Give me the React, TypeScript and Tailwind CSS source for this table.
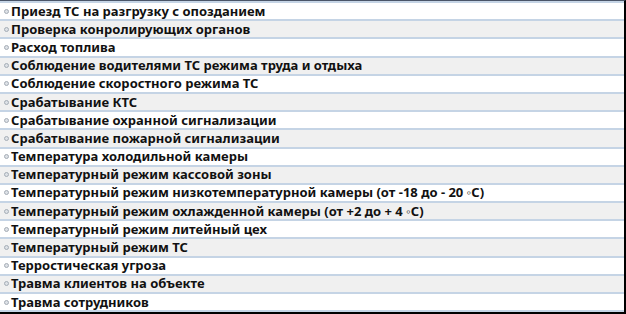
import React from "react";

const items = [
  "Приезд ТС на разгрузку с опозданием",
  "Проверка конролирующих органов",
  "Расход топлива",
  "Соблюдение водителями ТС режима труда и отдыха",
  "Соблюдение скоростного режима ТС",
  "Срабатывание КТС",
  "Срабатывание охранной сигнализации",
  "Срабатывание пожарной сигнализации",
  "Температура холодильной камеры",
  "Температурный режим кассовой зоны",
  "Температурный режим низкотемпературной камеры (от -18 до - 20 ◦С)",
  "Температурный режим охлажденной камеры (от +2 до + 4 ◦С)",
  "Температурный режим литейный цех",
  "Температурный режим ТС",
  "Терростическая угроза",
  "Травма клиентов на объекте",
  "Травма сотрудников",
];

export default function App() {
  return (
    <div className="w-[626px] h-[314px] bg-white overflow-hidden">
      <div className="w-[626px] h-[314px] border-t border-t-[#4a5568] border-r-2 border-r-black border-b-2 border-b-black flex flex-col">
        {items.map((t, i) => (
          <div
            key={i}
            className={`h-[18.2px] shrink-0 border-t-2 border-t-[#c5d4e5] flex items-center ${
              i % 2 === 0 ? "bg-white" : "bg-[#f0f0f0]"
            }`}
          >
            <span className="ml-[4px] mr-[2px] w-[5px] h-[5px] rounded-full bg-[#dde1e6] border border-[#a5adb6] shrink-0" />
            <span
              className="text-[13px] font-bold text-[#111] leading-none whitespace-nowrap"
              style={{ fontFamily: '"Noto Sans", sans-serif' }}
            >
              {t}
            </span>
          </div>
        ))}
        <div className="flex-1 border-t-2 border-t-[#c5d4e5] bg-white" />
      </div>
    </div>
  );
}
